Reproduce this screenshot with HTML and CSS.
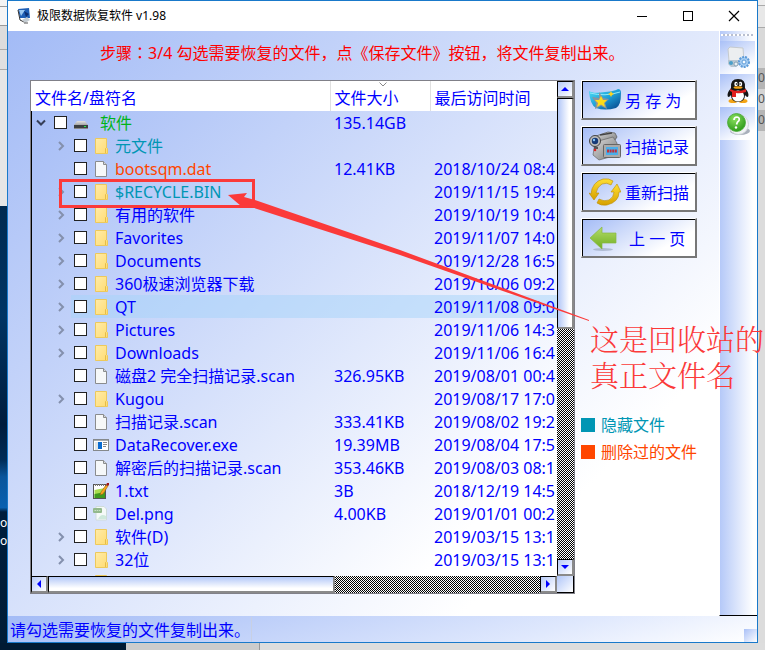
FILE: index.html
```html
<!DOCTYPE html>
<html lang="zh-CN">
<head>
<meta charset="utf-8">
<title>极限数据恢复软件 v1.98</title>
<link rel="stylesheet" href="styles.css">
</head>
<body>
<svg class="defs" aria-hidden="true">
  <defs>
    <linearGradient id="gFolder" x1="0" y1="0" x2="1" y2="1"><stop offset="0" stop-color="#ffeba8"/><stop offset="1" stop-color="#ffdc72"/></linearGradient>
    <linearGradient id="gDrive" x1="0" y1="0" x2="0" y2="1"><stop offset="0" stop-color="#e2e2e2"/><stop offset="1" stop-color="#a5a5a5"/></linearGradient>
    <linearGradient id="gBlue" x1="0" y1="0" x2="1" y2="1"><stop offset="0" stop-color="#4fe0f4"/><stop offset=".5" stop-color="#1d9fd8"/><stop offset="1" stop-color="#073f86"/></linearGradient>
    <linearGradient id="gGold" x1="0" y1="0" x2="0" y2="1"><stop offset="0" stop-color="#ffdf35"/><stop offset="1" stop-color="#d6a000"/></linearGradient>
    <linearGradient id="gGreen" x1="0" y1="0" x2="0" y2="1"><stop offset="0" stop-color="#b4dc6a"/><stop offset="1" stop-color="#6fae22"/></linearGradient>
    <radialGradient id="gBall" cx=".4" cy=".3" r=".7"><stop offset="0" stop-color="#8be05e"/><stop offset="1" stop-color="#2f9c1c"/></radialGradient>
    <linearGradient id="gCam" x1="0" y1="0" x2="1" y2="1"><stop offset="0" stop-color="#dedede"/><stop offset="1" stop-color="#777"/></linearGradient>
  </defs>
  <symbol id="folder" viewBox="0 0 16 16"><path d="M2.500 .500H13.500V9.500L14.500 10.500V15.500H2.500Z" fill="url(#gFolder)" stroke="#edc95c"/><path d="M12.500 15V10.500L13.500 9.500" fill="none" stroke="#e6bd48"/></symbol>
  <symbol id="file" viewBox="0 0 16 16"><path d="M2.500 .500H10.500L13.500 3.500V15.500H2.500Z" fill="#f6f8f9" stroke="#8a8c8e"/><path d="M10.500 .500V3.500H13.500" fill="#d5d8da" stroke="#8a8c8e"/></symbol>
  <symbol id="drive" viewBox="0 0 16 16"><path d="M4 6H12L15 10H1Z" fill="url(#gDrive)"/><path d="M1 10H15V13H1Z" fill="#3c3f40"/><path d="M1 13.500H15" stroke="#888"/><rect x="11" y="11" width="2" height="1" fill="#22ee44"/></symbol>
  <symbol id="exe" viewBox="0 0 16 16"><rect x=".500" y="2.500" width="15" height="11" fill="#fff" stroke="#85898c"/><path d="M1 3.500H15" stroke="#a9adb0"/><rect x="2" y="5" width="3" height="8" fill="#dfe5e8"/><rect x="5" y="5" width="4" height="7" fill="#0a6bd0"/><path d="M10 5.500H14M10 7.500H14M10 9.500H13" stroke="#888"/></symbol>
  <symbol id="txt" viewBox="0 0 16 16"><rect x=".500" y="1.500" width="12" height="14" fill="#fff" stroke="#555"/><path d="M1.500 7L12 5V15H1.500Z" fill="#a8dd4d"/><path d="M1.500 11L12 9V15H1.500Z" fill="#3f9b1d"/><path d="M2.500 1V3M4.500 1V3M6.500 1V3M8.500 1V3M10.500 1V3" stroke="#777"/><path d="M7 12L8 9L13 2L15 3L10 11Z" fill="#f6a51c" stroke="#8c5a10" stroke-width=".5"/><path d="M13 2L14 0H16V2L15 3Z" fill="#a01818"/></symbol>
  <symbol id="png" viewBox="0 0 16 16"><path d="M3 .500H11L13.500 3V14H3Z" fill="#f5f9f8" stroke="#cfdcd9"/><path d="M5 13Q8 7 13 10V13Z" fill="#cfe9dc"/><rect x="0" y="2" width="9" height="5" rx="1" fill="#93b98c"/><path d="M1.500 4.500H7.500" stroke="#c9dfc4" stroke-dasharray="1.500 .700"/></symbol>
  <symbol id="open" viewBox="0 0 12 12"><path d="M2 3.500L6 7.500L10 3.500" fill="none" stroke="#363f58" stroke-width="2"/></symbol>
  <symbol id="closed" viewBox="0 0 12 12"><path d="M4 2L8 6L4 10" fill="none" stroke="#8490ad" stroke-width="2"/></symbol>
</svg>

<div class="desktop">
  <div class="behind behind-left"><div class="panes"></div><div class="wall"><span>ol</span><span>o</span></div></div>

  <div class="window">
    <header class="titlebar">
      <svg class="logo" viewBox="0 0 16 16"><path d="M1 1L12 0L13 10L3 10Z" fill="#1f5fb5"/><path d="M2 2L8 2L4 8Z" fill="#9cc9f2"/><path d="M7 3L12 6L9 9Z" fill="#0b2f73"/><path d="M1 2L3 12L7 14" fill="none" stroke="#333"/><path d="M5 12L10 9L13 12L8 15Z" fill="#c4ccd2"/><path d="M7 15H11" stroke="#555"/></svg>
      <h1>极限数据恢复软件 v1.98</h1>
      <button class="caption" aria-label="最小化"><svg viewBox="0 0 12 12"><path d="M1 6.500H11" stroke="#000"/></svg></button>
      <button class="caption" aria-label="最大化"><svg viewBox="0 0 12 12"><rect x="1.500" y="1.500" width="9" height="9" fill="none" stroke="#000"/></svg></button>
      <button class="caption" aria-label="关闭"><svg viewBox="0 0 12 12"><path d="M1 1L11 11M11 1L1 11" stroke="#000" stroke-width="1.200"/></svg></button>
    </header>

    <div class="client">
      <main class="main">
        <p class="step">步骤<span class="colon" lang="zh-TW">：</span>3/4 勾选需要恢复的文件，点《保存文件》按钮，将文件复制出来。</p>
        <div class="work">
          <div class="tree">
            <div class="view">
              <table>
                <colgroup><col><col class="c-size"><col class="c-date"></colgroup>
                <thead><tr><th>文件名/盘符名</th><th class="sorted">文件大小<svg class="sort" viewBox="0 0 8 5"><path d="M.500 .500L4 4L7.500 .500" fill="none" stroke="#888"/></svg></th><th>最后访问时间</th></tr></thead>
                <tbody id="rows"></tbody>
              </table>
            </div>
            <div class="bar vertical">
              <button class="arrow" aria-label="向上"><svg viewBox="0 0 8 8"><path d="M0 6L4 2L8 6Z" fill="#00f"/></svg></button>
              <div class="thumb"></div><div class="track"></div>
              <button class="arrow" aria-label="向下"><svg viewBox="0 0 8 8"><path d="M0 2L4 6L8 2Z" fill="#00f"/></svg></button>
            </div>
            <div class="bar horizontal">
              <button class="arrow" aria-label="向左"><svg viewBox="0 0 8 8"><path d="M6 0L2 4L6 8Z" fill="#00f"/></svg></button>
              <div class="thumb"></div><div class="track"></div>
              <button class="arrow" aria-label="向右"><svg viewBox="0 0 8 8"><path d="M2 0L6 4L2 8Z" fill="#00f"/></svg></button>
            </div>
            <div class="corner"></div>
          </div>

          <div class="side">
            <button class="action"><svg viewBox="0 0 32 32"><path d="M0 7Q4 10 16 8Q26 7 29 5Q32 5 32 9Q32 22 27 24Q16 27 7 24Q1 21 0 7Z" fill="url(#gBlue)"/><path d="M1 9Q16 13 31 8" fill="none" stroke="#8feafa" stroke-width="1"/><path d="M10 8L14 14L20 15L16 19L18 25L12 22L6 25L7 19L3 13L10 14Z" fill="#8a949c"/><path d="M12 12L14 16L18 16L15 19L16 23L12 20.500L8 23L9 19L6 16L10 16Z" fill="#ffdc18"/><path d="M22 7L23 9L25 10L23 11L22 13L21 11L19 10L21 9Z" fill="#ffd21a"/></svg><span>另 存 为</span></button>
            <button class="action"><svg viewBox="0 0 32 32"><path d="M7 6L19 2L26 3L28 7L26 10L12 12L7 11Z" fill="url(#gCam)" stroke="#555" stroke-width=".7"/><path d="M6 12L24 7L28 13V25L10 30L4 25Z" fill="url(#gCam)" stroke="#666" stroke-width=".7"/><path d="M11 5L23 3" stroke="#444" stroke-width="1.500"/><circle cx="6" cy="11" r="5.500" fill="#bbb" stroke="#444"/><circle cx="6" cy="11" r="3.200" fill="#163a78"/><circle cx="5" cy="10" r="1.200" fill="#85c4f4"/><path d="M5 18H9" stroke="#555" stroke-width="2"/><circle cx="6" cy="20" r="1.300" fill="#d22"/><rect x="14.500" y="14.500" width="17" height="13" rx="1" fill="#aaa" stroke="#666"/><rect x="17" y="17" width="12" height="8" fill="#48aeea"/><path d="M18 21H28" stroke="#c22f3a" stroke-width="3" stroke-dasharray="2 .600"/></svg><span>扫描记录</span></button>
            <button class="action"><svg viewBox="0 0 32 32"><path d="M2 18Q3 6 14 3Q20 2 24 5L22 9Q18 6 13 8Q8 11 7 17L10 17L5 24L0 17Z" fill="url(#gGold)" stroke="#bc8b00" stroke-width=".6"/><path d="M30 16Q30 26 18 29Q12 30 8 27L10 23Q15 26 20 24Q25 21 25 16L22 16L28 8L32 16Z" fill="url(#gGold)" stroke="#bc8b00" stroke-width=".6"/></svg><span>重新扫描</span></button>
            <button class="action back"><svg viewBox="0 0 32 32"><ellipse cx="14" cy="27.500" rx="10" ry="1.500" fill="#8795ac" opacity=".5"/><path d="M1 16L13 5V11H27V21H13V27Z" fill="url(#gGreen)" stroke="#88b842" stroke-width=".7"/></svg><span>上 一 页</span></button>
            <ul class="legend"><li class="hidden-file">隐藏文件</li><li class="deleted-file">删除过的文件</li></ul>
          </div>
        </div>
      </main>

      <aside class="tools">
        <div class="grip"></div>
        <button class="tool" aria-label="设置"><svg viewBox="0 0 24 24"><path d="M2 3L4 1L17 2L18 16L3 15Z" fill="#eceef0" stroke="#c6cace"/><path d="M2 14H13V18L10 21H5L2 18Z" fill="#b7c6d2"/><circle cx="5" cy="17" r="2" fill="#4a9fc9"/><circle cx="10" cy="18" r="2" fill="#e8eef2" stroke="#6a8da5" stroke-width=".7"/><circle cx="18" cy="16" r="5" fill="#a6cdf2" stroke="#5d9bd9" stroke-width="2" stroke-dasharray="2 1"/><circle cx="18" cy="16" r="2" fill="#f6fbff" stroke="#5d9bd9"/></svg></button>
        <button class="tool" aria-label="QQ"><svg viewBox="0 0 24 24"><ellipse cx="7" cy="22" rx="4.500" ry="2" fill="#f3a416"/><ellipse cx="17" cy="22" rx="4.500" ry="2" fill="#f3a416"/><path d="M5 9Q4 0 12 0Q20 0 19 9Q24 15 22 18Q20 18 19 16Q19 23 12 23Q5 23 5 16Q4 18 2 18Q0 15 5 9Z" fill="#151515"/><ellipse cx="12" cy="17" rx="6" ry="5.500" fill="#fff"/><ellipse cx="10" cy="5" rx="1.700" ry="2.300" fill="#fff"/><ellipse cx="14.500" cy="5" rx="1.700" ry="2.300" fill="#fff"/><circle cx="10.500" cy="5" r=".8"/><circle cx="14" cy="5" r=".8"/><ellipse cx="12" cy="8.500" rx="4.500" ry="1.300" fill="#f3a416"/><path d="M4 10Q12 14 20 10L20 13Q14 15 10 14V18H6V13L4 12Z" fill="#e02020"/></svg></button>
        <button class="tool" aria-label="帮助"><svg viewBox="0 0 24 24"><ellipse cx="14" cy="19" rx="10" ry="4" fill="#a9b0bb"/><circle cx="12.500" cy="12.500" r="10" fill="#f1f3f5" stroke="#cfd4d9"/><circle cx="10.500" cy="10.500" r="9" fill="url(#gBall)" stroke="#48a836" stroke-width=".8"/><path d="M8 8Q8 5 11 5Q14 5.500 13 8.500Q11 10 10.500 12.500" fill="none" stroke="#fff" stroke-width="1.700"/><circle cx="10" cy="15.500" r="1.200" fill="#fff"/></svg></button>
      </aside>

      <div class="mark-box"></div>
      <svg class="mark-arrow" viewBox="0 0 362 130"><path d="M0 2L19 0L16 4L27 7L172 57L361 127V128L172 62L20 13L13 13Z" fill="#fb3a3a"/></svg>
      <p class="mark-note">这是回收站的<br>真正文件名</p>
    </div>

    <footer class="status"><span>请勾选需要恢复的文件复制出来。</span><i></i></footer>
  </div>

  <div class="behind behind-right"><span>0</span><span>0</span><span>0</span></div>
  <div class="behind-bottom"></div>
</div>
<script src="app.js"></script>
</body>
</html>
```

FILE: app.js
```js
// icon, name, size, date, expandable, extra class
const rows = [
  ['drive', '软件', '135.14GB', '', 'open', 'root'],
  ['folder', '元文件', '', '', 'closed', 'hidden-name'],
  ['file', 'bootsqm.dat', '12.41KB', '2018/10/24 08:4', '', 'deleted-name'],
  ['folder', '$RECYCLE.BIN', '', '2019/11/15 19:4', 'closed', 'hidden-name'],
  ['folder', '有用的软件', '', '2019/10/19 10:4', 'closed', ''],
  ['folder', 'Favorites', '', '2019/11/07 14:0', 'closed', ''],
  ['folder', 'Documents', '', '2019/12/28 16:5', 'closed', ''],
  ['folder', '360极速浏览器下载', '', '2019/10/06 09:2', 'closed', ''],
  ['folder', 'QT', '', '2019/11/08 09:0', 'closed', 'hot'],
  ['folder', 'Pictures', '', '2019/11/06 14:3', 'closed', ''],
  ['folder', 'Downloads', '', '2019/11/06 16:4', 'closed', ''],
  ['file', '磁盘2 完全扫描记录.scan', '326.95KB', '2019/08/01 00:4', '', ''],
  ['folder', 'Kugou', '', '2019/08/17 17:0', 'closed', ''],
  ['file', '扫描记录.scan', '333.41KB', '2019/08/02 19:2', '', ''],
  ['exe', 'DataRecover.exe', '19.39MB', '2019/08/04 17:5', '', ''],
  ['file', '解密后的扫描记录.scan', '353.46KB', '2019/08/03 08:1', '', ''],
  ['txt', '1.txt', '3B', '2018/12/19 14:5', '', ''],
  ['png', 'Del.png', '4.00KB', '2019/01/01 00:2', '', ''],
  ['folder', '软件(D)', '', '2019/03/15 13:1', 'closed', ''],
  ['folder', '32位', '', '2019/03/15 13:1', 'closed', ''],
  ['folder', '', '', '', 'closed', '']
];

document.getElementById('rows').innerHTML = rows.map(([icon, name, size, date, state, cls]) => `
  <tr class="${cls}">
    <td class="name"><div class="cell">
      <span class="twist">${state ? `<svg><use href="#${state}"/></svg>` : ''}</span>
      <label class="item"><input type="checkbox"><svg class="icon"><use href="#${icon}"/></svg><span>${name}</span></label>
    </div></td>
    <td>${size}</td><td>${date}</td>
  </tr>`).join('');
```

FILE: styles.css
```css
* { box-sizing: border-box; }

body {
  margin: 0;
  font: 16px/24px "Noto Sans", "Noto Sans CJK SC", sans-serif;
  color: #00f;
}

button {
  font: inherit;
  color: inherit;
  padding: 0;
  border: 0;
}

svg { display: block; flex: none; }
.defs { position: absolute; width: 0; height: 0; }

/* Desktop behind the window */
.desktop {
  display: grid;
  grid-template-columns: 7px minmax(0, 1fr) 7px;
  grid-template-rows: minmax(0, 1fr) 7px;
  height: 100vh;
  overflow: hidden;
}

.behind { overflow: hidden; font-size: 12px; line-height: 18px; }
.behind-left { display: flex; flex-direction: column; }

.panes {
  flex: none;
  height: 206px;
  background: linear-gradient(#f4f4f4 6px, #999 6px 7px, #f5f5f5 7px 25px, #999 25px 26px, #dcdcdc 26px 49px, #aaa 49px 50px, #e0e0e0 50px 69px, #aaa 69px 70px, #e6e6e6 70px);
}

.wall {
  flex: 1;
  display: flex;
  flex-direction: column;
  align-items: flex-start;
  padding-top: 308px;
  color: #fff;
  background: linear-gradient(#002a50, #003463 25%, #001c3c 50%, #002b55 58%, #0a559b 62%, #0961b0 69%, #001e3c 70%, #001c36);
}

.behind-right {
  display: flex;
  flex-direction: column;
  gap: 3px;
  padding-top: 69px;
  color: #555;
  background: linear-gradient(#eee 5px, #aaa 5px 6px, #e8e8e8 6px 27px, #aaa 27px 28px, #d9d9d9 28px 68px, #b5b5b5 68px 89px, #d4d4d4 89px 110px, #b5b5b5 110px 131px, #dcdcdc 131px);
}

.behind-bottom {
  grid-column: 1 / -1;
  background: linear-gradient(90deg, #001a33 126px, #ccc 126px 259px, #999 259px 260px, #ddd 260px);
}

/* Window frame */
.window {
  display: flex;
  flex-direction: column;
  min-width: 0;
  min-height: 0;
  border: 1px solid #1979ca;
  background: #fff;
}

.titlebar {
  display: flex;
  align-items: center;
  flex: none;
  height: 30px;
  padding-left: 9px;
  color: #000;
}

.logo { width: 16px; height: 16px; }
.titlebar h1 { flex: 1; margin: 0 0 0 4px; font-size: 12px; font-weight: 400; }
.caption { width: 46px; height: 30px; background: none; }
.caption svg { width: 12px; height: 12px; margin: auto; }

.client {
  position: relative;
  display: flex;
  flex: 1;
  min-height: 0;
}

.main {
  display: flex;
  flex-direction: column;
  flex: 1;
  min-width: 0;
  padding: 0 22px;
  padding-top: 10px;
  background: linear-gradient(135deg, #a3bbf6, #fff 80%);
}

.step { margin: 0 0 15px; padding-left: 70px; color: #f00; white-space: nowrap; }
.colon { font-family: "Noto Sans CJK TC", sans-serif; line-height: 1; }

.work { display: flex; flex: 1; gap: 6px; min-height: 0; padding-bottom: 22px; }

/* File tree */
.tree {
  display: grid;
  grid-template-columns: minmax(0, 1fr) 17px;
  grid-template-rows: minmax(0, 1fr) 17px;
  flex: 1;
  min-width: 0;
  border: 1px solid #808088;
  background: linear-gradient(135deg, #a3bbf6, #fff 84%);
}

.view { overflow: hidden; background: linear-gradient(90deg, #000 1px, transparent 1px); }
table { width: 100%; table-layout: fixed; border-collapse: collapse; }
.c-size { width: 100px; }
.c-date { width: 127px; }

th {
  height: 30px;
  padding: 3px 0 0 4px;
  border-left: 1px solid #e0e0e0;
  background: #fff;
  font-weight: 400;
  text-align: left;
  white-space: nowrap;
}

th:first-child { border-left: 0; }
.sorted { position: relative; }
.sort { position: absolute; top: 1px; left: 48px; width: 8px; height: 5px; }

td { height: 23px; padding: 1px 0 0 4px; overflow: hidden; line-height: 22px; white-space: nowrap; }
td.name { padding: 0; }

.cell { display: flex; height: 23px; }
.twist { display: flex; align-items: center; justify-content: flex-end; width: 40px; padding-right: 4px; }
.twist svg { width: 12px; height: 12px; }
.item { display: flex; flex: 1; align-items: center; padding-left: 3px; }
.item span { padding-top: 1px; }

.item input {
  appearance: none;
  width: 13px;
  height: 13px;
  margin: 0 6px 0 0;
  border: 1px solid #222;
  background: #fff;
}

.icon { width: 16px; height: 16px; margin-right: 6px; }
.root .twist { width: 20px; }
.root .icon { margin-right: 11px; }
.root .item { color: #00b418; }
.hidden-name .item { color: #0096b4; }
.deleted-name .item { color: #ff4600; }
.hot td:not(.name), .hot .item { background: rgba(165, 212, 250, .5); }

/* Scroll bars */
.bar { display: flex; min-width: 0; min-height: 0; }
.vertical { flex-direction: column; }

.arrow, .thumb {
  border: solid;
  border-width: 1px 2px 2px 1px;
  border-color: #000 #8a8a8a #8a8a8a #000;
}

.arrow {
  display: flex;
  flex: none;
  align-items: center;
  justify-content: center;
  width: 17px;
  height: 17px;
  background: linear-gradient(135deg, #b7caf8, #fff);
}

.arrow svg { width: 8px; height: 8px; }
.thumb { flex: 229; background: linear-gradient(90deg, #b3c8f8, #fff 80%); }
.track { flex: 232; background: repeating-conic-gradient(#000 0 25%, #fff 0 50%) 0 0 / 2px 2px; }
.horizontal .thumb { flex: 286; background: linear-gradient(#b3c8f8, #fff 80%); }
.horizontal .track { flex: 206; }
.corner { border: solid #000; border-width: 0 1px 1px 0; background: linear-gradient(135deg, #b0c6f8, #fff); }

/* Action buttons and legend */
.side { display: flex; flex-direction: column; gap: 6px; width: 116px; flex: none; }

.action {
  display: flex;
  align-items: center;
  gap: 4px;
  height: 40px;
  padding-left: 7px;
  border: solid;
  border-width: 1px 2px 2px 1px;
  border-color: #fff #777 #777 #fff;
  box-shadow: inset 1px 1px #000;
  background: linear-gradient(150deg, #a3bbf6, #fff 75%);
  white-space: nowrap;
}

.action svg { width: 32px; height: 32px; }
.action span { padding-top: 2px; }
.back { gap: 8px; }

.legend { margin: 147px 0 0; padding: 0; list-style: none; white-space: nowrap; }
.legend li { display: flex; align-items: center; gap: 6px; height: 27px; }
.legend li::before { content: ""; width: 14px; height: 14px; background: currentColor; }
.hidden-file { color: #0096b4; }
.deleted-file { color: #ff4600; }

/* Right-hand tool strip */
.tools {
  flex: none;
  width: 38px;
  padding-top: 3px;
  border-left: 1px solid #fff;
  border-bottom: 1px solid #000;
  background: linear-gradient(90deg, #b5c9f8, #fff 90%);
}

.grip { height: 2px; margin: 0 4px 5px 1px; background: repeating-linear-gradient(90deg, #fff 0 2px, #b9bfd0 2px 4px); }
.tool { display: flex; align-items: center; justify-content: center; width: 35px; height: 33px; background: linear-gradient(150deg, #a9c0f7, #fff 80%); }
.tool svg { width: 24px; height: 24px; }

/* Annotation drawn over the window */
.mark-box { position: absolute; left: 51px; top: 148px; width: 196px; height: 29px; border: 3px solid #fb3a3a; }
.mark-arrow { position: absolute; left: 220px; top: 162px; width: 362px; height: 130px; }

.mark-note {
  position: absolute;
  left: 582px;
  top: 290px;
  margin: 0;
  color: #fb3a3a;
  font: 300 29px/36px "Noto Serif CJK SC", "Noto Sans CJK SC", serif;
  white-space: nowrap;
}

.status {
  display: flex;
  flex: none;
  align-items: center;
  justify-content: space-between;
  height: 26px;
  padding-left: 2px;
  background: linear-gradient(165deg, #a3bbf6, #dfe8fd 70%, #fff);
}

.status span { width: 242px; padding-top: 1px; border-right: 1px solid #c8d0e4; white-space: nowrap; }
.status i { align-self: flex-end; width: 13px; height: 13px; background: linear-gradient(135deg, #a9c0f7, #fff); }
```
